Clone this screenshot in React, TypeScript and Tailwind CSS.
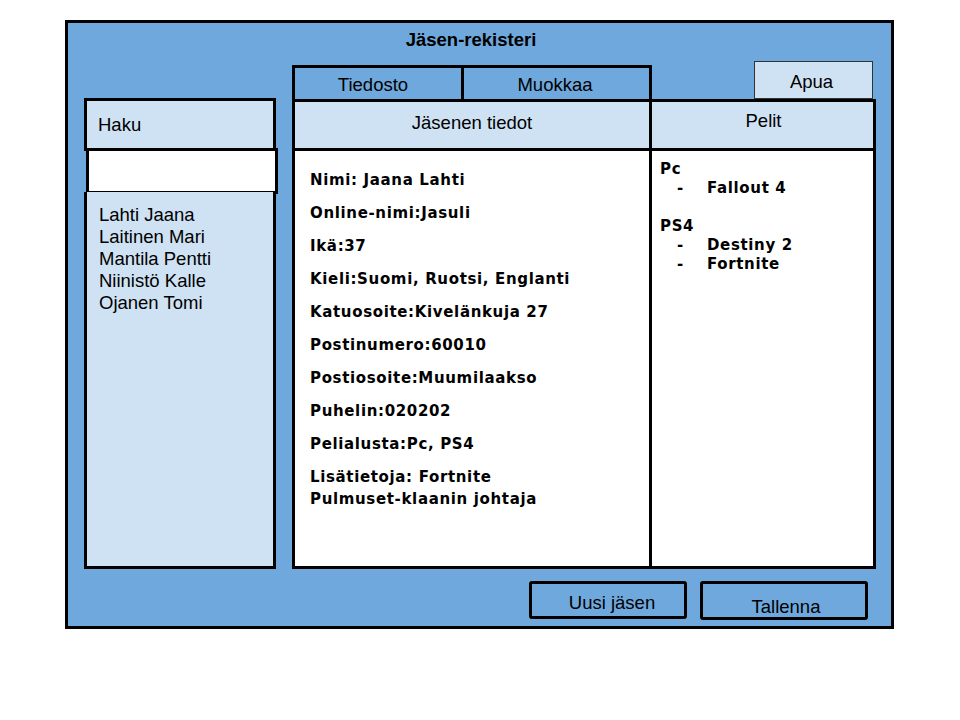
import React from "react";

export default function App() {
  const details: string[][] = [
    ["Nimi: Jaana Lahti"],
    ["Online-nimi:Jasuli"],
    ["Ikä:37"],
    ["Kieli:Suomi, Ruotsi, Englanti"],
    ["Katuosoite:Kivelänkuja 27"],
    ["Postinumero:60010"],
    ["Postiosoite:Muumilaakso"],
    ["Puhelin:020202"],
    ["Pelialusta:Pc, PS4"],
    ["Lisätietoja: Fortnite", "Pulmuset-klaanin johtaja"],
  ];
  const names = ["Lahti Jaana", "Laitinen Mari", "Mantila Pentti", "Niinistö Kalle", "Ojanen Tomi"];

  return (
    <div className="w-[960px] h-[720px] bg-white pt-[20px] pl-[65px] text-black font-['Liberation_Sans',Arial,sans-serif]">
      <div className="w-[829px] h-[609px] border-[3px] border-black bg-[#6fa8dc] flex flex-col">
        {/* title */}
        <div className="h-[38px] flex justify-center pt-[6px] pr-[17px]">
          <span className="text-[18.5px] font-bold leading-[22px]">Jäsen-rekisteri</span>
        </div>

        {/* main row */}
        <div className="flex items-start pl-[16px] h-[507px]">
          {/* left column */}
          <div className="w-[192px] mt-[37px] h-[471px] flex flex-col">
            <div className="h-[53px] border-[3px] border-black bg-[#cfe2f3] pl-[11px] flex items-center">
              <span className="text-[18.5px] leading-[22px] pt-[1px]">Haku</span>
            </div>
            <div className="h-[46px] -mt-[3px] ml-[2px] w-[192px] border-[3px] border-black bg-white" />
            <div className="flex-1 -mt-[2px] border-[3px] border-t-0 border-black bg-[#cfe2f3] pl-[12px] pt-[12px]">
              {names.map((n) => (
                <div key={n} className="text-[18.5px] leading-[22px]">{n}</div>
              ))}
            </div>
          </div>

          {/* middle column */}
          <div className="w-[360px] ml-[16px] mt-[4px] h-[504px] flex flex-col">
            <div className="h-[37px] flex">
              <div className="w-[172px] border-[3px] border-black flex items-center justify-center pr-[10px]">
                <span className="text-[18.5px] leading-[22px] pt-[3px]">Tiedosto</span>
              </div>
              <div className="flex-1 border-[3px] border-l-0 border-black flex items-center justify-center pr-[3px]">
                <span className="text-[18.5px] leading-[22px] pt-[3px]">Muokkaa</span>
              </div>
            </div>
            <div className="h-[49px] border-[3px] border-t-0 border-black bg-[#cfe2f3] flex justify-center pt-[10px]">
              <span className="text-[18.5px] leading-[22px]">Jäsenen tiedot</span>
            </div>
            <div className="flex-1 border-[3px] border-t-0 border-black bg-white pl-[15px] pt-[18px] font-['DejaVu_Sans',Verdana,sans-serif] font-bold text-[15px] tracking-[0.65px]">
              {details.map((lines, i) => (
                <div key={i} className="mb-[11px] leading-[22px]">
                  {lines.map((l) => (
                    <div key={l}>{l}</div>
                  ))}
                </div>
              ))}
            </div>
          </div>

          {/* right column */}
          <div className="w-[224px] h-[508px] flex flex-col">
            <div className="h-[38px] flex justify-end pr-[3px]">
              <div className="w-[119px] h-[38px] border border-[#333] bg-[#cfe2f3] flex justify-center pt-[9px] pr-[4px]">
                <span className="text-[18.5px] leading-[22px]">Apua</span>
              </div>
            </div>
            <div className="h-[52px] border-[3px] border-l-0 border-black bg-[#cfe2f3] flex justify-center pt-[8px]">
              <span className="text-[18.5px] leading-[22px] pl-[2px]">Pelit</span>
            </div>
            <div className="flex-1 border-[3px] border-t-0 border-l-0 border-black bg-white pl-[8px] pt-[9px] font-['DejaVu_Sans',Verdana,sans-serif] font-bold text-[15px] tracking-[0.65px] leading-[19px]">
              <div>Pc</div>
              <div className="flex"><span className="w-[47px] pl-[17px]">-</span><span>Fallout 4</span></div>
              <div className="h-[19px]" />
              <div>PS4</div>
              <div className="flex"><span className="w-[47px] pl-[17px]">-</span><span>Destiny 2</span></div>
              <div className="flex"><span className="w-[47px] pl-[17px]">-</span><span>Fortnite</span></div>
            </div>
          </div>
        </div>

        {/* buttons */}
        <div className="flex justify-end pr-[23px] pt-[13px] gap-[13px]">
          <div className="w-[158px] h-[38px] border-[3px] border-black rounded-[3px] flex justify-center pt-[8px] pl-[8px]">
            <span className="text-[18.5px] leading-[22px]">Uusi jäsen</span>
          </div>
          <div className="w-[168px] h-[39px] border-[3px] border-black rounded-[3px] flex justify-center pt-[12px] pl-[4px]">
            <span className="text-[18.5px] leading-[22px]">Tallenna</span>
          </div>
        </div>
      </div>
    </div>
  );
}
